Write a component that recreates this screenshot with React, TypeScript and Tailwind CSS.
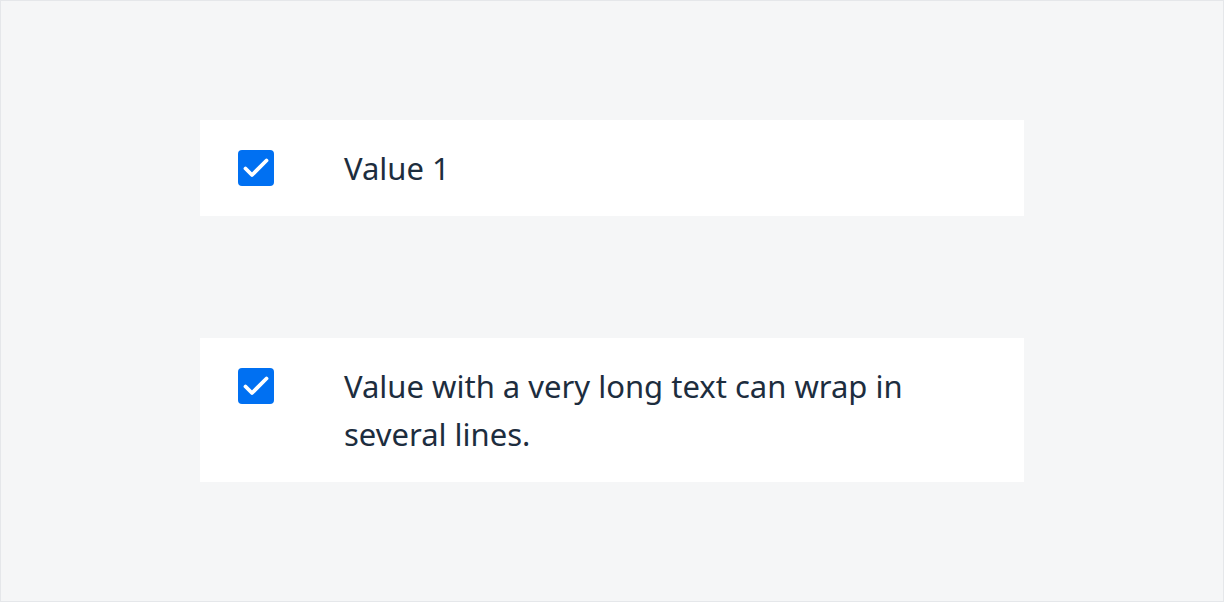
import React from "react";

const items = [
  { id: 1, label: "Value 1" },
  { id: 2, label: "Value with a very long text can wrap in several lines." },
];

function CheckBox() {
  return (
    <div className="w-9 h-9 shrink-0 rounded-[4px] bg-[#0070f2] mt-[6px]">
      <svg viewBox="0 0 36 36" className="w-9 h-9">
        <path
          d="M7.5 18.5 L14 25 L28.5 10.5"
          fill="none"
          stroke="#fff"
          strokeWidth="3.8"
          strokeLinecap="round"
          strokeLinejoin="round"
        />
      </svg>
    </div>
  );
}

export default function App() {
  return (
    <div
      className="h-[602px] w-[1224px] border border-[#e5e7ea] bg-[#f5f6f7] flex flex-col gap-[122px] px-[199px] pt-[119px]"
      style={{ fontFamily: '"Noto Sans", "Open Sans", sans-serif' }}
    >
      {items.map((item) => (
        <div key={item.id} className="bg-white flex items-start py-6 pl-[38px] pr-[38px]">
          <CheckBox />
          <p className="ml-[70px] text-[31px] leading-[48px] text-[#1d2d3e]">{item.label}</p>
        </div>
      ))}
    </div>
  );
}
